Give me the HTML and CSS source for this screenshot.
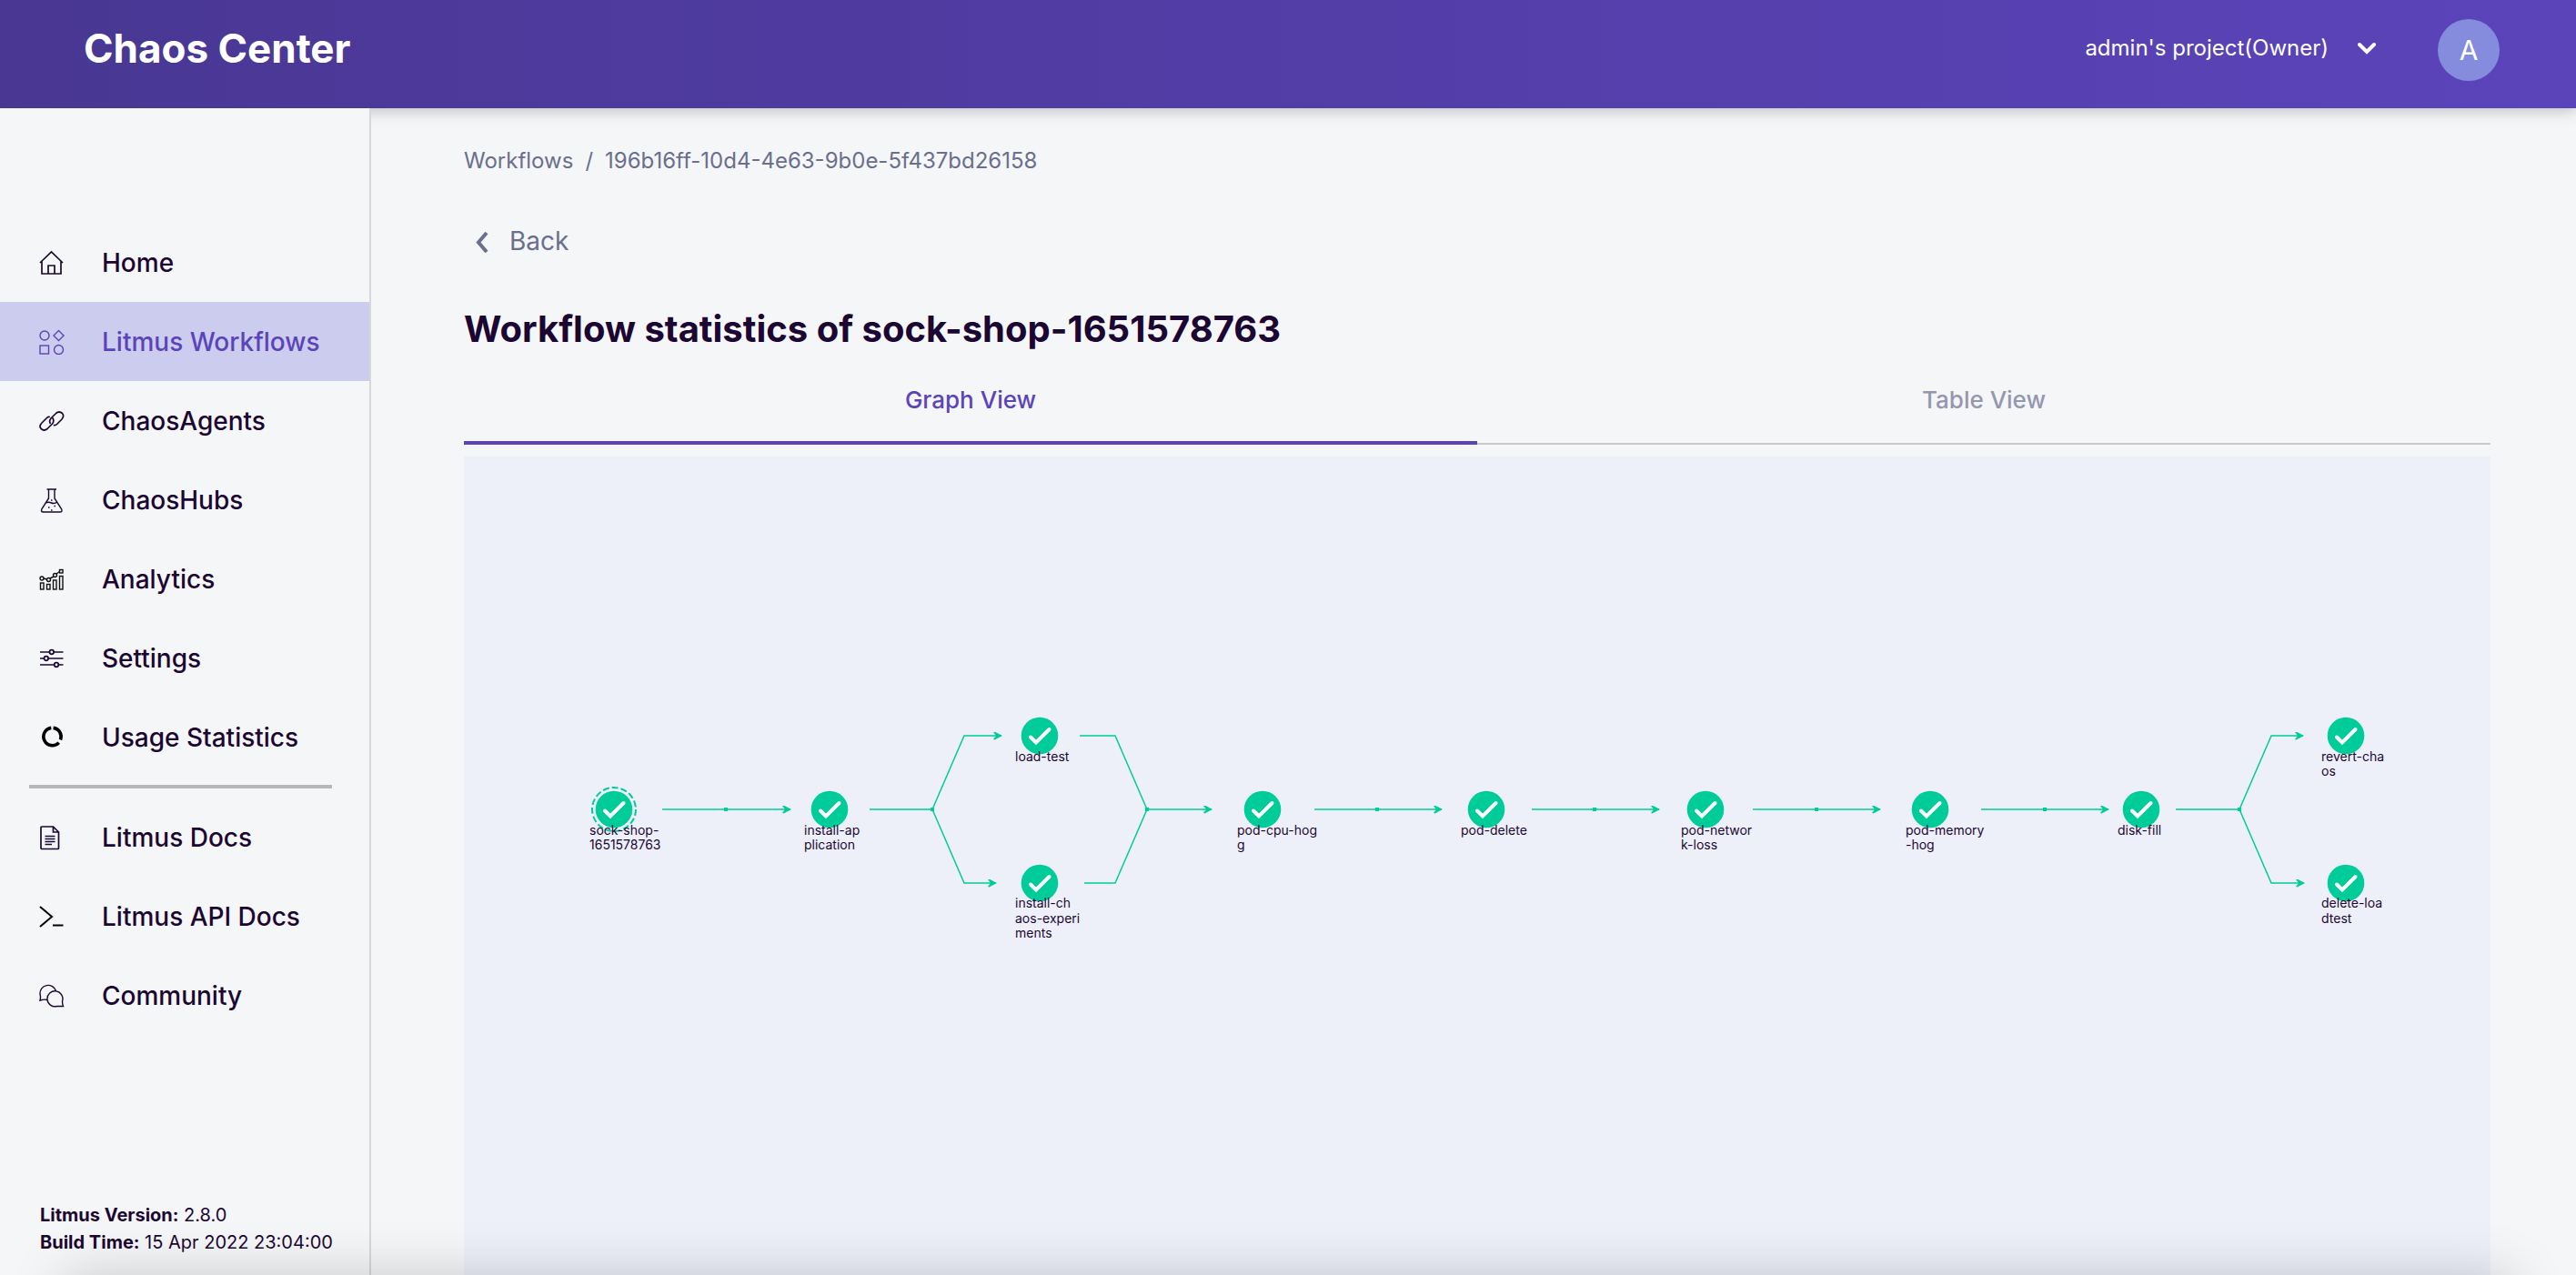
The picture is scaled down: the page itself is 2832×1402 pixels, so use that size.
FILE: index.html
```html
<!DOCTYPE html>
<html lang="en">
<head>
<meta charset="utf-8">
<title>Chaos Center</title>
<link rel="stylesheet" href="styles.css">
</head>
<body>
<header class="topbar">
  <a class="brand" href="#">Chaos Center</a>
  <button class="project" type="button">
    <span>admin's project(Owner)</span>
    <svg class="caret" viewBox="0 0 20 14" aria-hidden="true"><path d="M2 3l8 8L18 3"/></svg>
  </button>
  <button class="avatar" type="button" aria-label="Account">A</button>
</header>
<div class="layout">
  <aside class="sidebar">
    <nav class="nav">
      <a href="#"><svg viewBox="0 0 28 28"><path d="M1 14L13.500 2L26 14M3 12.500V26h21V12.500M10 26V17h7v9"/></svg>Home</a>
      <a href="#" class="active"><svg class="thin" viewBox="0 0 28 28"><circle cx="6" cy="7" r="5"/><path d="M21.500 1.500L27 7l-5.500 5.500L16 7z"/><rect x="1" y="18" width="9.500" height="9"/><circle cx="21.500" cy="22.500" r="5"/></svg>Litmus Workflows</a>
      <a href="#"><svg viewBox="0 0 28 28"><path d="M11.800 9.500Q10 9 8.500 10.500L3 16Q-.5 19.500 2.200 22.500Q5.500 25.500 9 22.500L14.500 17Q17 14 14.800 10.500M15.800 18.500Q18 19 19.500 17.500L25 12Q28 8.500 25.500 5.500Q22 2.500 18.500 5.500L13 11Q10.500 14 12.500 17"/></svg>ChaosAgents</a>
      <a href="#"><svg class="thin" viewBox="0 0 28 28"><path d="M8.500 2h10.500M10.500 2v10L3 23.500Q1.500 27 4.500 27h19Q26 27 24.500 23.500L17 12V2M7 17q3.500-1.500 6.500 0t6.500-1"/><path d="M13 14h1.500M10 22h1.500M13 25h1.500M16.500 20.500h1.500"/></svg>ChaosHubs</a>
      <a href="#" class="dark"><svg class="thin" viewBox="0 0 28 28"><rect x="1.500" y="18" width="3.500" height="7"/><rect x="8.500" y="19.500" width="3.500" height="5.500"/><rect x="15.500" y="15" width="3.500" height="10"/><rect x="22.500" y="10.500" width="3.500" height="14.500"/><circle cx="3" cy="13" r="2"/><circle cx="10.500" cy="14.500" r="2"/><circle cx="17.500" cy="9.500" r="2"/><rect x="22.500" y="3.500" width="3.500" height="3.500"/><path d="M5 13l3.500 1M12 13l4-2M19 8l3.500-2.500"/></svg>Analytics</a>
      <a href="#"><svg viewBox="0 0 28 28"><path d="M1 7h10.500M16 7h10.500M1 14h4.500M10 14h16.500M1 21h15.500M21.500 21h5"/><circle cx="13.800" cy="7" r="2.300"/><circle cx="7.800" cy="14" r="2.300"/><circle cx="19" cy="21" r="2.300"/></svg>Settings</a>
      <a href="#"><svg class="usage" viewBox="0 0 28 28"><path d="M13.300 3.400A9.700 9.700 0 1 0 21.700 19.600M15.600 3.400A9.700 9.700 0 0 1 23.500 16.500"/></svg>Usage Statistics</a>
    </nav>
    <hr class="rule">
    <nav class="nav">
      <a href="#"><svg viewBox="0 0 28 28"><path d="M2 3q0-1 1-1h12.500l6 6V25.500q0 1-1 1H3q-1 0-1-1zM15.500 2v6h6M6.500 12.500h11M6.500 15.500h11M6.500 18.500h11M6.500 21.500h7.500"/></svg>Litmus Docs</a>
      <a href="#"><svg class="term" viewBox="0 0 28 28"><path d="M1 3l13 11L1 25M15 23.500h11.500"/></svg>Litmus API Docs</a>
      <a href="#"><svg class="thin" viewBox="0 0 28 28"><path d="M9 18.500Q6 17.500 1 19q1-3 0-7A9 9 0 0 1 18.500 8.500M26.500 25.500Q22 25.500 19.500 25.500A8.500 8.500 0 1 1 25.500 20q0 3 1 5.500z"/></svg>Community</a>
    </nav>
    <div class="build">
      <p><b>Litmus Version:</b> 2.8.0</p>
      <p><b>Build Time:</b> 15 Apr 2022 23:04:00</p>
    </div>
  </aside>
  <main class="main">
    <div class="crumbs"><a href="#">Workflows</a><span>/</span><a href="#">196b16ff-10d4-4e63-9b0e-5f437bd26158</a></div>
    <button class="back" type="button"><svg viewBox="0 0 16 26" aria-hidden="true"><path d="M13 4L4 14.500L13 25"/></svg>Back</button>
    <h1>Workflow statistics of sock-shop-1651578763</h1>
    <div class="tabs" role="tablist">
      <button type="button" role="tab" class="tab selected" aria-selected="true">Graph View</button>
      <button type="button" role="tab" class="tab" aria-selected="false">Table View</button>
    </div>
    <section class="canvas">
      <svg class="graph" viewBox="0 0 2228 900">
        <defs>
          <marker id="arrow" viewBox="0 0 10 9" refX="9" refY="4.500" markerWidth="10" markerHeight="9" markerUnits="userSpaceOnUse"><path class="head" d="M0 .5L1.500 0L10 4.500L1.500 9L0 8.500L3 4.500z"/></marker>
          <g id="ok"><circle class="disc" r="20.300"/><path class="tick" d="M-10 1.500L-4 7.500L10.500-7"/></g>
        </defs>
        <g class="edges">
          <path d="M218 388H359"/><path d="M446 388H515L550 307H591"/><path d="M515 388L550 469H585"/>
          <path class="plain" d="M677 307H716L751 388L716 469H682"/><path d="M751 388H822"/>
          <path d="M935 388H1075"/><path d="M1174 388H1314"/><path d="M1417 388H1557"/><path d="M1668 388H1808"/>
          <path d="M1882 388H1952L1987 307H2022"/><path d="M1952 388L1987 469H2023"/>
        </g>
        <path class="dots" d="M286 388h4M513 388h4M749 388h4M1002 388h4M1241 388h4M1485 388h4M1736 388h4M1950 388h4"/>
        <circle class="ring" cx="165" cy="388" r="24"/>
        <use href="#ok" x="165" y="388"/><use href="#ok" x="402" y="388"/><use href="#ok" x="633" y="307"/><use href="#ok" x="633" y="469"/><use href="#ok" x="878" y="388"/><use href="#ok" x="1124" y="388"/><use href="#ok" x="1365" y="388"/><use href="#ok" x="1612" y="388"/><use href="#ok" x="1844" y="388"/><use href="#ok" x="2069" y="307"/><use href="#ok" x="2069" y="469"/>
        <g class="labels">
          <text y="416"><tspan x="138">sock-shop-</tspan><tspan x="138" dy="16">1651578763</tspan></text>
          <text y="416"><tspan x="374">install-ap</tspan><tspan x="374" dy="16">plication</tspan></text>
          <text x="606" y="335">load-test</text>
          <text y="496"><tspan x="606">install-ch</tspan><tspan x="606" dy="17">aos-experi</tspan><tspan x="606" dy="16">ments</tspan></text>
          <text y="416"><tspan x="850">pod-cpu-hog</tspan><tspan x="850" dy="16">g</tspan></text>
          <text x="1096" y="416">pod-delete</text>
          <text y="416"><tspan x="1338">pod-networ</tspan><tspan x="1338" dy="16">k-loss</tspan></text>
          <text y="416"><tspan x="1585">pod-memory</tspan><tspan x="1585" dy="16">-hog</tspan></text>
          <text x="1818" y="416">disk-fill</text>
          <text y="335"><tspan x="2042">revert-cha</tspan><tspan x="2042" dy="16">os</tspan></text>
          <text y="496"><tspan x="2042">delete-loa</tspan><tspan x="2042" dy="17">dtest</tspan></text>
        </g>
      </svg>
    </section>
  </main>
</div>
</body>
</html>
```
FILE: styles.css
```css
* { box-sizing: border-box; }
body {
  margin: 0;
  height: 100vh;
  display: flex;
  flex-direction: column;
  overflow: hidden;
  background: #f5f6f8;
  color: #1c0732;
  font-family: Inter, sans-serif;
  font-size: 24px;
}
button { border: 0; padding: 0; background: none; font: inherit; color: inherit; cursor: pointer; }
a { color: inherit; text-decoration: none; }

.topbar {
  flex: none;
  height: 119px;
  display: flex;
  align-items: center;
  padding: 0 84px 14px 92px;
  background: linear-gradient(90deg, #493793, #5b44ba);
  box-shadow: 0 2px 16px rgba(0, 0, 0, 0.25);
  color: #fff;
}
.brand { font-size: 44px; font-weight: 700; margin-right: auto; }
.project { display: flex; align-items: center; gap: 32px; margin-right: 68px; }
.caret { width: 20px; height: 14px; fill: none; stroke: #fff; stroke-width: 4; stroke-linecap: round; }
.avatar { width: 68px; height: 68px; margin-top: 4px; border-radius: 50%; background: #858cdd; font-size: 30px; }

.layout { flex: 1; min-height: 0; display: flex; }
.sidebar {
  position: relative;
  flex: none;
  width: 408px;
  display: flex;
  flex-direction: column;
  padding: 126px 0 21px;
  border-right: 2px solid #d6d7d9;
  background: #f5f6f8;
}
.nav { display: flex; flex-direction: column; }
.nav a {
  display: flex;
  align-items: center;
  gap: 41px;
  height: 87px;
  padding-left: 43px;
  font-size: 28px;
  font-weight: 500;
}
.nav .active { background: #cccdee; color: #5b44ba; }
.nav svg { width: 28px; height: 28px; fill: none; stroke: currentColor; stroke-width: 1.7; }
.nav .thin { stroke-width: 1.4; }
.nav .usage { stroke: #000; stroke-width: 3.6; }
.nav .term { stroke: #000; stroke-width: 2; }
.dark svg { stroke: #111; }
.rule { width: 333px; height: 4px; margin: 9px 0 10px 32px; border: 0; background: #b8b8b9; }
.build { margin-top: auto; padding-left: 44px; font-size: 20px; line-height: 30px; }
.build p { margin: 0; }

.main {
  flex: 1;
  min-width: 0;
  display: flex;
  flex-direction: column;
  padding: 42px 94px 0 102px;
}
.crumbs { display: flex; gap: 13px; line-height: 32px; color: #696f8c; }
.back { display: flex; align-items: center; align-self: flex-start; gap: 22px; margin: 54px 0 0 12px; font-size: 28px; line-height: 36px; color: #696f8c; }
.back svg { width: 16px; height: 26px; fill: none; stroke: currentColor; stroke-width: 4; }
h1 { margin: 53px 0 0; font-size: 40px; line-height: 52px; font-weight: 700; }
.tabs { display: flex; margin-top: 17px; }
.tab { flex: 1; height: 84px; padding-bottom: 14px; border-bottom: 2px solid #c9cacc; font-size: 26px; font-weight: 500; color: #9596b0; }
.selected { padding-bottom: 12px; border-bottom: 4px solid #5b44ba; color: #5b44ba; }
.canvas { flex: 1; min-height: 0; margin-top: 13px; overflow: hidden; background: #edeff9; }
.graph { display: block; width: 100%; }
.edges path { fill: none; stroke: #00cc9a; stroke-width: 1.5; marker-end: url(#arrow); }
.edges .plain { marker-end: none; }
.dots { stroke: #00cc9a; stroke-width: 4; }
.edges .head, .head, .disc { fill: #00cc9a; }
.tick { fill: none; stroke: #fff; stroke-width: 4; stroke-linecap: round; }
.ring { fill: none; stroke: #00cc9a; stroke-width: 2; stroke-dasharray: 7 3; }
.labels { font-size: 14px; fill: #1c0732; }

body::after {
  content: "";
  position: fixed;
  inset: 100% 70px auto;
  height: 80px;
  box-shadow: 0 0 60px rgba(0, 0, 0, 0.18);
  pointer-events: none;
}
```
